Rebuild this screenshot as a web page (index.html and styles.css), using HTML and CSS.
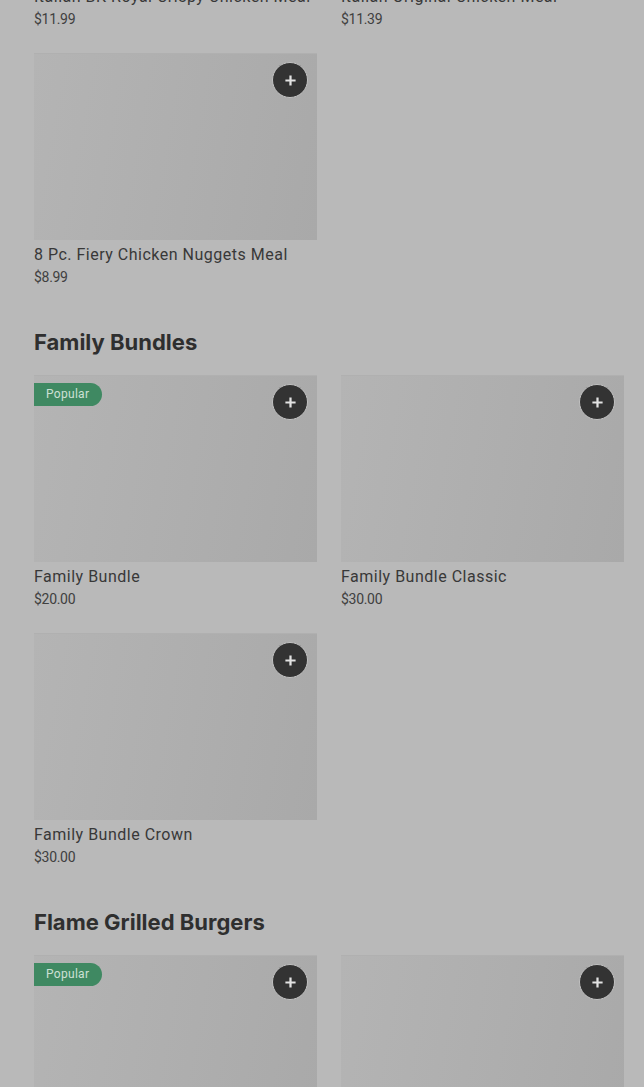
FILE: index.html
```html
<!DOCTYPE html>
<html lang="en">
  <head>
    <meta charset="UTF-8" />
    <meta name="viewport" content="width=device-width, initial-scale=1.0" />
    <title>Menu</title>
    <link rel="stylesheet" href="styles.css">
  </head>
  <body>
    <div class="menu">
      <div class="grid">
        <div class="item">
          <div class="photo">
            <button class="add" aria-label="Add">
              <svg viewBox="0 0 14 14"><path d="M7 1.5v11M1.5 7h11" /></svg>
            </button>
          </div>
          <div class="name">Italian BK Royal Crispy Chicken Meal</div>
          <div class="price">$11.99</div>
        </div>
        <div class="item">
          <div class="photo">
            <button class="add" aria-label="Add">
              <svg viewBox="0 0 14 14"><path d="M7 1.5v11M1.5 7h11" /></svg>
            </button>
          </div>
          <div class="name">Italian Original Chicken Meal</div>
          <div class="price">$11.39</div>
        </div>
        <div class="item">
          <div class="photo">
            <button class="add" aria-label="Add">
              <svg viewBox="0 0 14 14"><path d="M7 1.5v11M1.5 7h11" /></svg>
            </button>
          </div>
          <div class="name">8 Pc. Fiery Chicken Nuggets Meal</div>
          <div class="price">$8.99</div>
        </div>
      </div>

      <h2>Family Bundles</h2>
      <div class="grid">
        <div class="item">
          <div class="photo">
            <span class="badge">Popular</span>
            <button class="add" aria-label="Add">
              <svg viewBox="0 0 14 14"><path d="M7 1.5v11M1.5 7h11" /></svg>
            </button>
          </div>
          <div class="name">Family Bundle</div>
          <div class="price">$20.00</div>
        </div>
        <div class="item">
          <div class="photo">
            <button class="add" aria-label="Add">
              <svg viewBox="0 0 14 14"><path d="M7 1.5v11M1.5 7h11" /></svg>
            </button>
          </div>
          <div class="name">Family Bundle Classic</div>
          <div class="price">$30.00</div>
        </div>
        <div class="item">
          <div class="photo">
            <button class="add" aria-label="Add">
              <svg viewBox="0 0 14 14"><path d="M7 1.5v11M1.5 7h11" /></svg>
            </button>
          </div>
          <div class="name">Family Bundle Crown</div>
          <div class="price">$30.00</div>
        </div>
      </div>

      <h2>Flame Grilled Burgers</h2>
      <div class="grid">
        <div class="item">
          <div class="photo">
            <span class="badge">Popular</span>
            <button class="add" aria-label="Add">
              <svg viewBox="0 0 14 14"><path d="M7 1.5v11M1.5 7h11" /></svg>
            </button>
          </div>
          <div class="name">Whopper Meal</div>
          <div class="price">$10.49</div>
        </div>
        <div class="item">
          <div class="photo">
            <button class="add" aria-label="Add">
              <svg viewBox="0 0 14 14"><path d="M7 1.5v11M1.5 7h11" /></svg>
            </button>
          </div>
          <div class="name">Double Whopper Meal</div>
          <div class="price">$12.49</div>
        </div>
      </div>
    </div>
  </body>
</html>
```

FILE: styles.css
```css
html,
body {
  height: 100%;
  overflow: hidden;
}
body {
  margin: 0;
  background-color: #b9b9b9;
  font-family: Roboto, "Liberation Sans", sans-serif;
  color: #363636;
}
.menu {
  margin-top: -205px;
  padding: 0 20px 0 34px;
}
.grid {
  display: grid;
  grid-template-columns: 283px 283px;
  column-gap: 24px;
  row-gap: 24px;
}
h2 {
  margin: 41px 0 19px;
  font-family: Inter, "Liberation Sans", sans-serif;
  font-size: 22px;
  line-height: 28px;
  font-weight: 700;
  letter-spacing: 0;
  color: #2f2f2f;
}
.photo {
  position: relative;
  height: 187px;
  border-top: 1px solid #b0b0b0;
  box-sizing: border-box;
  background: linear-gradient(100deg, #b4b4b4 0%, #aeaeae 55%, #a9a9a9 100%);
}
.add {
  position: absolute;
  top: 8px;
  right: 9px;
  width: 36px;
  height: 36px;
  padding: 0;
  border: 1px solid #c2c2c2;
  border-radius: 50%;
  background-color: #333;
  display: flex;
  align-items: center;
  justify-content: center;
}
.add svg {
  width: 13px;
  height: 13px;
  stroke: #e2e2e2;
  stroke-width: 2.4;
  fill: none;
}
.badge {
  position: absolute;
  top: 7px;
  left: 0;
  padding: 0 13px 0 12px;
  height: 23px;
  line-height: 23px;
  border-radius: 0 12px 12px 0;
  background-color: #3f8962;
  color: #cde0d5;
  font-size: 12px;
  letter-spacing: 0.3px;
}
.name {
  margin-top: 3px;
  font-size: 16px;
  line-height: 24px;
  letter-spacing: 0.5px;
  color: #383838;
  white-space: nowrap;
}
.price {
  font-size: 14px;
  line-height: 20px;
  letter-spacing: -0.3px;
  color: #404040;
}
```
